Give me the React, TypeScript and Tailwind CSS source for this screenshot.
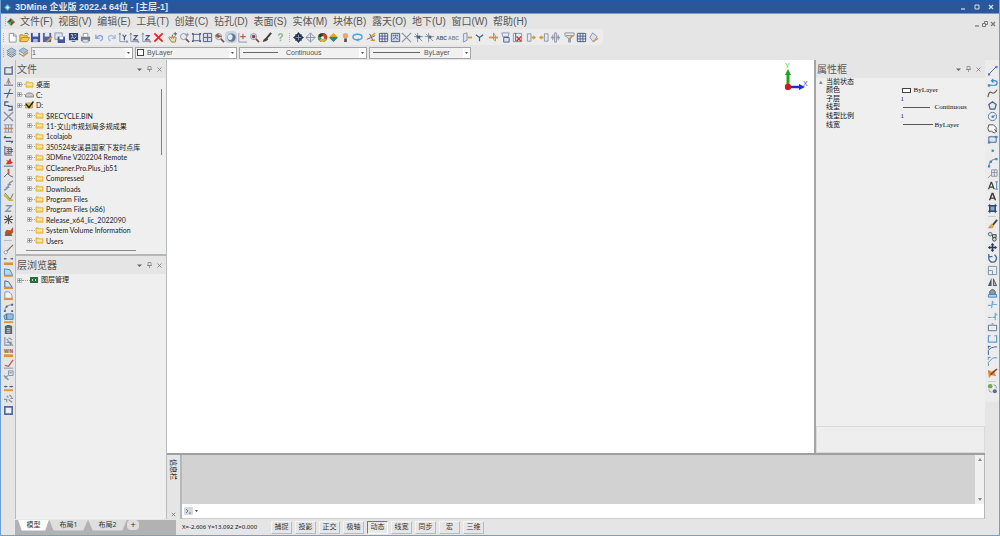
import { ReactNode } from "react";

const N = "#485c84";
const G = "#8792a8";
const O = "#d8963c";
const K = "#3c3c3c";
const B = "#3f86c8";
const R = "#d5352b";

type PathProps = { d: string; c?: string; f?: string; w?: number };

function P({ d, c = N, f = "none", w = 1 }: PathProps) {
  return <path d={d} stroke={c} fill={f} strokeWidth={w} />;
}

function F({ d, c = N }: { d: string; c?: string }) {
  return <path d={d} fill={c} />;
}

function Glyph({ children }: { children: ReactNode }) {
  return (
    <svg viewBox="0 0 12 12" className="size-[11px] shrink-0" aria-hidden="true">
      {children}
    </svg>
  );
}

type Item = [string, ReactNode];

const base = <F c={O} d="M1 9h10v2H1z" />;

const fileTools: Item[] = [
  ["新建", <P c={G} f="#fff" d="M2.5 1.5h5l2.500 2.500v7h-7.500zM7 1.500v3h3" />],
  ["打开", <><P c="#c08a1e" f="#f4c64e" d="M1 10.500V3h3l1 1h4v2M1 10.500l2-4.500h8.500l-2.500 4.500z" /><P c={N} d="M6 2q3-2 4.500 1" /></>],
  ["保存", <><F c="#3c4f9c" d="M1 1h10v10H1z" /><F c="#e4e9f6" d="M3 1h6v4H3z" /><F c="#aab6da" d="M3.500 7.500h5V11h-5z" /></>],
  ["另存", <><F c="#5363a4" d="M1 1h9v10H1z" /><F c="#e4e9f6" d="M3 1h5v4H3z" /><P c={O} w={2} d="M5 11l6-6" /></>],
  ["全部保存", <><P c={G} f="#dfe5f2" d="M1 1h8v7H1z" /><F c="#44579c" d="M4 5h8v7H4z" /><F c="#fff" d="M6 5h4v3H6z" /></>],
];
const printTools: Item[] = [
  ["截图", <><F c="#304071" d="M1 1h10v8H1zM4 10h4v1H4z" /><P c="#d8e4ff" d="M3 3h2v2M7 3h2M3 7l2-1 2 1 2-2" /></>],
  ["打印", <><F c="#747b89" d="M1 5h10v5H1z" /><P c={G} f="#fff" d="M3.500 5V1.500h5V5M3 8.500h6v2.500H3z" /></>],
];
const axis = <P c={G} d="M2 1v9.500h9M1 3l1-2 1 2M9 9l2 1.500L9 12" />;
const editTools: Item[] = [
  ["撤销", <P c="#8ba8e0" w={1.500} d="M2 3v4h4M2.500 6.500Q6 2 9 5q1 3-2 5" />],
  ["重做", <P c="#a9bfe8" w={1.500} d="M10 3v4H6M9.500 6.500Q6 2 3 5q-1 3 2 5" />],
  ["XY视图", <>{axis}<P c={N} w={1.300} d="M5 3l2 2.500L9 3M7 5v4" /></>],
  ["YZ视图", <>{axis}<P c={N} w={1.300} d="M5 4h4L5 8.500h4.500" /></>],
  ["XZ视图", <>{axis}<P c={N} w={1.300} d="M5 4h4L5 8.500h4.500" /></>],
  ["删除", <P c="#e32922" w={2} d="M1.500 1.500l9 9M10.500 1.500l-9 9" />],
];
const lens = <><circle cx="5" cy="5" r="3.300" fill="#e9eef6" stroke={G} /><P c="#7d5148" w={1.800} d="M7.500 7.500L11 11" /></>;
const viewTools: Item[] = [
  ["平移", <><P c="#8c795c" f="#f3dfae" d="M2 6l3 5h4l1-5-2-1-1 2-1-4-1 4-2-2z" /><P c={N} d="M7 2h4M9 0v4" /></>],
  ["动态缩放", <>{lens}<P c={G} d="M9 1v4M7 3h4" /></>],
  ["窗口缩放", <><P c={N} d="M2.500 2.500h7v7h-7z" /><F c={N} d="M1 1h2v2H1zM9 1h2v2H9zM1 9h2v2H1zM9 9h2v2H9z" /></>],
  ["全部显示", <><P c={N} f="#d7deea" d="M1.500 1.500h9v9h-9z" /><P c={N} d="M6 2v8M2 6h8" /><F c="#a85f54" d="M5 5h2v2H5z" /></>],
  ["上一视图", <>{lens}<F c="#9b5e36" d="M1 4l4-3v2l4 2-4 1v1z" /></>],
  ["三维旋转", <><circle cx="6" cy="6" r="4.500" fill="#66768f" /><path d="M2 4q3-3 5 0 1 3-2 5Q1 8 2 4z" fill="#e3ecf5" /></>],
  ["定位", <><P c={G} d="M2 1v10h9" /><P c="#b0654a" w={1.300} d="M6.500 2v6M3.500 5h6" /></>],
  ["查询", <>{lens}<circle cx="5" cy="5" r="2" fill="#9d3857" /></>],
  ["画刷", <><P c={K} w={2} d="M11 1L6 7" /><F c="#4b433e" d="M6 6l2 2q-2 3-6 3 0-3 4-5z" /></>],
];
const helpTools: Item[] = [
  ["帮助", <P c="#8fc091" w={1.700} d="M4 4q0-2 2-2t2 2q0 1-2 2v1.500M6 8.500v1.500" />],
];
const modelTools: Item[] = [
  ["实体显示", <><F c="#2b3550" d="M6 0l2 2.500h1.500V4L12 6l-2.500 2v1.500H8L6 12 4 9.500H2.500V8L0 6l2.500-2V2.500H4z" /><P c="#8797b5" d="M6 3v6M3 6h6" /></>],
  ["线框显示", <><P c={G} f="#e3e8ef" d="M6 1l5 5-5 5-5-5z" /><P c={G} d="M6 1v10M1 6h10" /></>],
  ["色彩", <><circle cx="6" cy="6" r="5" fill="#333" /><path d="M6 6V1a5 5 0 0 1 4.500 7z" fill="#da3a31" /><path d="M6 6l4.500 2A5 5 0 0 1 2 9z" fill="#d9b23a" /><path d="M6 6L2 9a5 5 0 0 1-1-4z" fill="#49a84c" /><circle cx="6" cy="6" r="1.500" fill="#fff" /></>],
  ["着色", <><F c="#d9a52d" d="M6 1l5 5H1z" /><F c="#2f8277" d="M1 6h10l-5 5z" /><P c="#496f8d" d="M2 6h8" /></>],
  ["灯光", <><circle cx="6" cy="4" r="3" fill="#eead51" /><F c="#555" d="M4.500 7h3v4h-3z" /></>],
  ["环绕", <><ellipse cx="6" cy="5.500" rx="5" ry="3" fill="none" stroke="#44a5e3" strokeWidth="1.500" /><P c="#44a5e3" d="M7 7l-2 2 3 1" /></>],
];
const textTool = (c: string) => <text x="6" y="8.500" fontSize="5.500" fontWeight="bold" textAnchor="middle" fill={c} fontFamily="Liberation Sans, sans-serif">ABC</text>;
const snapTools: Item[] = [
  ["捕捉设置", <><P c={N} d="M1 8l9-4M4 2l4 8" /><P c={O} w={1.500} d="M4 6l6-5M5 9h5" /></>],
  ["网格", <P c={N} d="M1.500 1.500h9v9h-9zM4.500 1v10M7.500 1v10M1 4.500h10M1 7.500h10" />],
  ["栅格点", <><P c={N} f="#cbd3e2" d="M1.500 1.500h9v9h-9z" /><P c={N} d="M3 4h2M7 4h2M3 8l3-2 3 2M6 3v2" /></>],
  ["交点", <P c={G} w={1.300} d="M1 1l10 10M11 1L1 11" />],
  ["点", <><P c={G} d="M5 1v10M1 5h10M2 2l8 8" /><F d="M4 4h4v3H4z" /></>],
  ["节点", <><P c={G} d="M5 1v10M1 5h10M2 2l8 8" /><F c="#4c756f" d="M5 4h3v3H5z" /></>],
  ["文字", textTool(N)],
  ["文字隐藏", textTool("#7a8990")],
];
const lineTools: Item[] = [
  ["剖面", <><P c={G} f="#dce4ef" d="M1.500 2l4-1v8l-4 2z" /><P c={O} w={2} d="M6 6h5" /></>],
  ["分支", <P c={N} w={1.300} d="M2 3l4 3v4M6 6l4-3" />],
];
const solidTools: Item[] = [
  ["移动", <><P c={G} f="#dce4ef" d="M6 1l2 3v6l-2-2z" /><P c={O} w={2} d="M1 6h10" /></>],
  ["复制实体", <><P c={G} f="#e5ebf3" d="M2 1h8l-1 4H3z" /><P c={N} f="#dbe2ec" d="M4 6h6v5H4z" /></>],
  ["删除实体", <><P c={G} f="#e5ebf3" d="M1.500 1.500h9v9h-9z" /><P c={R} w={1.600} d="M5 5l5 5M10 5l-5 5" /><P c={N} d="M4 1v9" /></>],
];
const sectionTools: Item[] = [
  ["右移剖面", <><P c={G} f="#e4eaf3" d="M1.500 2h4v8h-4z" /><F c={O} d="M6 5h2V3.500L11 6 8 8.500V7H6z" /></>],
  ["左移剖面", <><P c={G} f="#e4eaf3" d="M7 2h4v8H7z" /><F c={O} d="M6 5H4V3.500L1 6l3 2.500V7h2z" /></>],
  ["双向剖面", <><P c={O} w={1.800} d="M1 6h10" /><P c={G} f="#e4eaf3" d="M5 1h2v10H5zM3 3v6M9 3v6" /></>],
];
const filterTools: Item[] = [
  ["过滤", <><P c={G} f="#e4eaf3" d="M1 1h10v3L7 7v4H5V7L1 4z" /><P c={O} w={1.500} d="M2 4h7L6 7v3" /></>],
  ["表格", <P c={N} d="M1.500 1.500h9v9h-9zM4.500 1v10M7.500 1v10M1 4.500h10M1 7.500h10" />],
  ["翻转", <><P c={G} f="#dce2ed" d="M5 1l5 4-4 6-4-5z" /><P c={O} w={1.500} d="M6 10l5-3" /></>],
];

const leftTop: Item[] = [
  ["闭合", <P c={N} w={1.300} d="M2 3h8v7H2zM10 1v3" />],
  ["打断", <><P c={G} w={1.500} d="M1 9h10M6 1v7" /><P c="#bf704d" d="M4 7l2-4 2 4" /></>],
  ["相交", <P c={N} w={1.200} d="M1 6h10M8 1L4 11" />],
  ["连接", <P c={N} w={1.300} d="M6 2H2v4h4v1h4v4H6" />],
  ["交叉", <P c={G} w={1.500} d="M1 1l10 10M11 1L1 11" />],
  ["等分", <><P c={G} d="M1 2h10M1 10h10M3 2v8M6 2v8M9 2v8" /><P c="#bd845d" w={1.500} d="M1 6h10" /></>],
  ["平行", <P c={N} w={1.200} d="M1 4h8M3 8h8M3 2L1 4M9 10l2-2" />],
  ["编辑节点", <><P c={N} d="M2 1v10h8M2 3h7v6H2M4 5h7M4 7h7" /><P c="#a55f48" d="M6 3v7" /></>],
  ["高程", <><P c={N} d="M1 10h10" /><F c={R} d="M3 8l2-3-2-2 3 1 2-3 1 4 2 1-3 2z" /></>],
  ["抬升", <><P c={N} d="M1 10l4-4 2 2 4 2" /><P c="#b46235" w={2} d="M6 1v6" /></>],
  ["光滑", <P c={G} w={1.500} d="M1 11q4-1 5-5t5-5M3 8h4M5 5h4" />],
  ["抽稀", <><P c="#4b7b55" d="M2 2l6 7 3-6" /><P c="#d0af42" w={1.800} d="M1 4l6 6h4" /></>],
  ["变换", <P c={G} w={1.400} d="M3 3h6L3 9h6" />],
  ["炸开", <P c="#555" w={1.200} d="M6 1v10M1 6h10M2 2l8 8M10 2l-8 8" />],
  ["着色刷", <><F c="#bc4f30" d="M2 7l2-3 4 1 3-4v6l-3 3H3z" /><P c="#3c664b" w={1.500} d="M2 10h8" /></>],
];
const leftBottom: Item[] = [
  ["量测", <><P c="#8c6a63" w={1.300} d="M4 8l7-7" /><circle cx="3" cy="9" r="1.800" fill="#fff" stroke={G} /></>],
  ["距离", <><F c={O} d="M1 7h10v3H1z" /><P c={N} d="M1 3h3M8 3h3M2 2v2M10 2v2" /></>],
  ["面积", <><P c={B} f="#bad8ef" d="M1.500 2l6 1 3 6h-9z" /><F c={O} d="M1 10h10v1H1z" /></>],
  ["坡度", <><P c={N} f="#d9e3ef" d="M2 9V2l4 1 4 6z" />{base}</>],
  ["体积", <><P c={G} f="#f1f3f6" d="M2 9V2h4q4 1 4 7z" />{base}</>],
  ["弧长", <><P c={G} w={1.300} d="M2 10q0-7 8-7" /><F c={N} d="M1 9h2v2H1zM3 4h2v2H3zM9 2h2v2H9zM9 9h2v2H9z" /></>],
  ["方量", <><P c={B} f="#9bbdd8" d="M1 3l3-2h7v6H2z" /><P c={N} d="M4 1v6" />{base}</>],
  ["剪贴板", <><F c="#5b6471" d="M2 2h8v9H2zM4 1h4v2H4z" /><P c="#cbd3db" d="M4 5h4M4 7h4M4 9h4" /></>],
  ["角度", <P c={G} w={1.200} d="M2 1v9h9M4 3l5 7M4 7h5v3M6 2l4 2" />],
  ["宽度标注", <><text x="6" y="6" fontSize="5" fontWeight="bold" textAnchor="middle" fill="#8d4b34" fontFamily="Liberation Sans, sans-serif">WIN</text><F c={O} d="M1 8h10v3H1z" /></>],
  ["清理", <><P c={G} d="M1 10h10" /><P c="#b46052" w={1.500} d="M11 1L6 8l-4-1" /></>],
  ["说明", <><P c={G} f="#d9e0eb" d="M6 1h5v5H6zM7 3h3" /><P c={G} w={1.500} d="M1 6l5 5M2 9l3-3" /></>],
  ["间距", <><F c={O} d="M1 8h10v2H1z" /><P c={N} d="M1 5h4M7 5h4M3 4v2M9 4v2" /></>],
  ["散点", <P c={G} w={1.300} d="M1 7h3v3M4 3l2 2M7 2l3 3M6 7l4 3M8 6h3" />],
  ["图框", <P c="#506b99" f="#eef2f8" w={1.800} d="M2 2h8v8H2z" />],
];
const dot = (x: number, y: number) => <F c={B} d={`M${x - 1} ${y - 1}h2.500v2.500h-2.500z`} />;
const rightTop: Item[] = [
  ["直线", <><P c={N} d="M2 10l8-8" />{dot(2, 10)}{dot(10, 2)}</>],
  ["多段线", <><P c={B} w={1.300} d="M1 9h7q3 0 3-2.500T8 4H5M7 2L5 4l2 2" />{dot(2, 9)}</>],
  ["曲线", <P c="#54565b" w={1.200} d="M1 10q1-7 4-5t6-3" />],
  ["多边形", <P c="#52627a" f="#e3eaf2" w={1.400} d="M6 2l4 3-1.500 5h-5L2 5z" />],
  ["圆", <><circle cx="6" cy="6" r="4.500" fill="#e9eef6" stroke="#65748d" /><P c={B} d="M6 6l3-1" />{dot(6, 6)}</>],
  ["云线", <P c="#4d4d4d" f="#f7f7f7" d="M2 2h5l3 3v4l-2 2-3-2H2L1 6zM8 7l3 3" />],
  ["矩形", <><P c={N} f="#d5e6f4" d="M2 3h8v6H2z" />{dot(2, 9)}{dot(10, 3)}</>],
  ["点", dot(6, 6)],
  ["圆弧", <><P c={G} w={1.200} d="M2 11q0-8 8-9" />{dot(2, 10)}{dot(10, 2)}{dot(4, 5)}</>],
  ["插入块", <P c={G} d="M5 2h6v7H5zM8 2v7M5 5h6M1 11l4-4" />],
  ["单行文字", <><path fillRule="evenodd" fill={K} d="M1 10L4 2h1.500l3 8H7L6.500 8.500H3L2.500 10zM3.500 7H6L4.700 3.700z" /><P c={B} d="M10.500 2v8M9 2h3M9 10h3" /></>],
  ["多行文字", <path fillRule="evenodd" fill={K} d="M2 10L5 2h2l3 8H8.300L7.700 8.500H4.300L3.700 10zM4.800 7h2.400L6 3.700z" />],
  ["图案", <><P c={N} w={1.500} f="#87a7cc" d="M3 3h6v6H3z" /><P c="#23446e" d="M1 3h10M1 9h10M3 1v10M9 1v10" /></>],
];
const rightBottom: Item[] = [
  ["擦除", <><P c="#444" w={2} d="M11 1L6 7" /><F c="#ddac49" d="M5 5l3 3-2 2-3-3z" /><F c="#d78176" d="M3 7l3 3H1z" /></>],
  ["复制", <><circle cx="3.500" cy="3.500" r="2" fill="#cde" stroke="#526d65" /><P c={K} f="#c9d8d5" d="M6 4h4v3H6z" /><circle cx="8" cy="9" r="2" fill="#cdd" stroke={K} /></>],
  ["移动", <><P c="#27375c" w={1.600} d="M6 2v8M2 6h8" /><F c="#27375c" d="M6 1l2 2.500H4zM6 11l2-2.500H4zM1 6l2.500-2v4zM11 6L8.500 4v4z" /></>],
  ["旋转", <P c="#426c94" w={1.500} d="M3 3a4.200 4.200 0 1 0 5-1M2 1v3h4" />],
  ["缩放", <P c="#7290ae" d="M1.500 1.500h9v9h-9zM1.500 6H6v4.500" />],
  ["镜像", <><F c="#505760" d="M5 2v9H1z" /><P c="#505760" f="#a6abb0" d="M7 3v7.500h3.500z" /></>],
  ["偏移", <><P c="#555" f="#8c9cab" d="M3 7V4q3-5 6 0v3z" /><P c={B} f="#b3d1e8" d="M1.500 7h9v3h-9z" /></>],
  ["修剪", <P c="#70afdf" w={1.300} d="M1 7h4l2-4M6 2l-1 8M5 6h6" />],
  ["延伸", <><P c="#70afdf" w={1.300} d="M6 7h2l3-4M9 2v8" /><P c={G} d="M1 7h4" /></>],
  ["拉伸", <P c="#56718d" d="M1.500 3.500h9v6h-9zM5 2h2" />],
  ["断开", <P c="#5e9bcd" w={1.300} d="M4 3H1.500v7h9V3H8" />],
  ["倒角", <P c="#345f90" d="M1.500 11V6q2-4 9.500-4M1.500 1v3M1 1.500h3" />],
  ["圆角", <P c="#5b8dbb" d="M1.500 11V7l5-5H11M1.500 1v3M1 1.500h3" />],
  ["分解", <><F c="#dc863d" d="M1 2l4 2 5-3-2 4 2 4-5-1-3 3z" /><P c="#7d392b" w={1.500} d="M4 7l7-6" /></>],
];
const rightLast: Item[] = [
  ["切换视图", <><circle cx="3.500" cy="3.500" r="2.500" fill="#73a951" /><circle cx="8.500" cy="9" r="2.300" fill="#6464aa" /><P c={G} d="M7 2q4 0 3 4M2 7q0 3 3 3" /></>],
];

function ToolButton({ item }: { item: Item }) {
  return (
    <button type="button" aria-label={item[0]} className={`flex min-h-0 min-w-0 items-center justify-center overflow-hidden ${item[0] === "三维旋转" ? "rounded-sm bg-[#c9d3df]" : ""}`}>
      <Glyph>{item[1]}</Glyph>
    </button>
  );
}

function HGroup({ items, width }: { items: Item[]; width: string }) {
  return (
    <div role="group" className={`grid h-3 shrink-0 auto-cols-fr grid-flow-col ${width}`}>
      {items.map((i) => <ToolButton key={i[0]} item={i} />)}
    </div>
  );
}

function VGroup({ items, height }: { items: Item[]; height: string }) {
  return (
    <div role="group" className={`grid w-full shrink-0 auto-rows-fr ${height}`}>
      {items.map((i) => <ToolButton key={i[0]} item={i} />)}
    </div>
  );
}

function Combo({ label, value, width, lead }: { label: string; value: string; width: string; lead?: ReactNode }) {
  return (
    <label className={`flex h-3 shrink-0 items-center border border-[#a5a5a5] bg-[#f1f1f1] ${width}`}>
      {lead}
      <select aria-label={label} className="h-full min-w-0 flex-1 appearance-none bg-transparent text-[7px] leading-[10px] text-[#555] outline-none">
        <option>{value}</option>
      </select>
      <span className="flex h-full w-[7px] items-center justify-center bg-white">
        <svg viewBox="0 0 6 4" className="w-[3px]"><path d="M0 0h6L3 4z" fill="#555" /></svg>
      </span>
    </label>
  );
}

function PanelHeader({ title }: { title: string }) {
  return (
    <div className="flex h-[18px] shrink-0 items-center bg-[#e5e5e5] pr-[3px] pl-px text-[#555]">
      <h2 className="flex-1 text-[10px] leading-3">{title}</h2>
      <div className="flex items-center gap-[3px]">
        <button type="button" aria-label="菜单"><svg viewBox="0 0 7 7" className="size-[7px]"><path d="M1 2.500h5L3.500 5z" fill="#666" /></svg></button>
        <button type="button" aria-label="固定"><svg viewBox="0 0 7 7" className="size-[7px]"><path d="M2 .500h3v3H2zM1 3.500h5M3.500 3.500V6" fill="none" stroke="#888" strokeWidth=".8" /></svg></button>
        <button type="button" aria-label="关闭"><svg viewBox="0 0 7 7" className="size-[7px]"><path d="M1.500 1.500l4 4M5.500 1.500l-4 4" stroke="#777" strokeWidth=".8" /></svg></button>
      </div>
    </div>
  );
}

function Expander() {
  return (
    <svg viewBox="0 0 5 5" className="size-[5px] shrink-0"><path d="M.500.500h4v4h-4z" fill="#eee" stroke="#aaa" strokeWidth=".8" /><path d="M1 2.500h3M2.500 1v3" stroke="#777" strokeWidth=".8" /></svg>
  );
}

function Folder() {
  return (
    <svg viewBox="0 0 9 8" className="h-[7px] w-[9px] shrink-0"><path d="M.500 7V1h3l1 1h4v5z" fill="#f7cf58" stroke="#d3a02f" strokeWidth=".7" /><path d="M1.500 3h6v2h-6z" fill="#fdebab" /></svg>
  );
}

const drives: [string, ReactNode][] = [
  ["桌面", <Folder />],
  ["C:", <svg viewBox="0 0 9 6" className="h-[6px] w-[9px] shrink-0"><path d="M.500 3l2-2h4l2 2v2h-8z" fill="#c9c9c9" stroke="#777" strokeWidth=".8" /></svg>],
  ["D:", <svg viewBox="0 0 9 8" className="h-2 w-[9px] shrink-0"><path d="M.500 7V2h7v5z" fill="#f3c64c" stroke="#b38a30" strokeWidth=".7" /><path d="M1 3l3 3.500L8.500.500" fill="none" stroke="#222" strokeWidth="1.500" /></svg>],
];
const folders = ["$RECYCLE.BIN", "11-文山市规划局多规成果", "1colajob", "350524安溪县国家下发时点库", "3DMine V202204 Remote", "CCleaner.Pro.Plus_jb51", "Compressed", "Downloads", "Program Files", "Program Files (x86)", "Release_x64_lic_2022090", "System Volume Information", "Users"];

function FileTree() {
  return (
    <div className="flex min-h-0 flex-1 flex-col pt-px">
      <div className="flex pr-1">
        <ul className="grid h-[167px] min-w-0 flex-1 auto-rows-fr pl-px font-['Lato','Noto_Sans_CJK_SC',sans-serif] text-[7px] text-[#1a1a1a]">
          {drives.map(([name, icon]) => (
            <li key={name} className="flex min-h-0 items-center whitespace-nowrap leading-[10px]">
              <Expander />
              <span className="w-[3px] border-t border-dotted border-[#aaa]" />
              {icon}
              <span className="pl-[2px]">{name}</span>
            </li>
          ))}
          {folders.map((name) => (
            <li key={name} className="flex min-h-0 items-center whitespace-nowrap pl-[10px] leading-[10px]">
              {name.startsWith("System") ? <span className="w-[5px] border-t border-dotted border-[#aaa]" /> : <Expander />}
              <span className="w-[3px] border-t border-dotted border-[#aaa]" />
              <Folder />
              <span className="pl-[2px]">{name}</span>
            </li>
          ))}
        </ul>
        <div className="mt-2.5 h-[66px] w-px bg-[#808080]" />
      </div>
      <div className="mt-1 ml-2.5 h-px w-[110px] bg-[#8a8a8a]" />
    </div>
  );
}

const properties: [string, string, ReactNode][] = [
  ["颜色", "ByLayer", <span className="mr-[3px] ml-px h-[5px] w-[9px] border border-[#444] bg-white" />],
  ["子层", "1", null],
  ["线型", "Continuous", <span className="mr-[5px] ml-0.5 w-[27px] border-t border-[#555]" />],
  ["线型比例", "1", null],
  ["线宽", "ByLayer", <span className="mr-0.5 ml-0.5 w-[30px] border-t border-[#555]" />],
];

function PropertyPanel() {
  return (
    <aside className="flex w-[171px] shrink-0 flex-col border-l-2 border-[#a3a6a8] bg-[#efefef]">
      <PanelHeader title="属性框" />
      <table className="h-[51px] w-full table-fixed font-['Liberation_Serif','Noto_Sans_CJK_SC',serif] text-[7px] leading-2 text-[#111]">
        <thead>
          <tr><th colSpan={2} className="p-0 text-left font-normal"><span className="inline-block w-[10px] pl-[3px] text-[#888]">▴</span>当前状态</th></tr>
        </thead>
        <tbody>
          {properties.map(([name, value, mark]) => (
            <tr key={name}>
              <th scope="row" className="w-[85px] p-0 pl-2.5 text-left font-normal">{name}</th>
              <td className="p-0"><span className="flex items-center">{mark}{value}</span></td>
            </tr>
          ))}
        </tbody>
      </table>
      <div className="mt-auto h-[27px] border border-[#dadada] bg-[#eeeeee]" />
    </aside>
  );
}

function AxisGizmo() {
  return (
    <svg viewBox="0 0 28 30" className="h-[30px] w-7" role="img" aria-label="坐标轴">
      <text x="4" y="6" fontSize="7" fill="#35d435" fontFamily="Liberation Sans, sans-serif">Y</text>
      <path d="M7 25V12" stroke="#17a717" strokeWidth="3" />
      <path d="M4 13l3-6 3 6z" fill="#17a717" />
      <path d="M7 25h13" stroke="#1832c8" strokeWidth="2.500" />
      <path d="M18 22l6 3-6 3z" fill="#1832c8" />
      <rect x="4" y="22" width="6" height="6" rx="2" fill="#c61e1e" />
      <text x="22" y="24" fontSize="7" fill="#3a46e8" fontFamily="Liberation Sans, sans-serif">X</text>
    </svg>
  );
}

const menus = ["文件(F)", "视图(V)", "编辑(E)", "工具(T)", "创建(C)", "钻孔(D)", "表面(S)", "实体(M)", "块体(B)", "露天(O)", "地下(U)", "窗口(W)", "帮助(H)"];
const modes = ["捕捉", "投影", "正交", "极轴", "动态", "线宽", "同步", "宏", "三维"];
const layouts = ["模型", "布局1", "布局2"];

function WindowButtons({ className, restore = false }: { className: string; restore?: boolean }) {
  return (
    <div className={`ml-auto flex ${className}`}>
      <button type="button" aria-label="最小化"><svg viewBox="0 0 6 6" className="size-1.5"><path d="M1 5h4" stroke="currentColor" strokeWidth="1.200" /></svg></button>
      <button type="button" aria-label="还原">
        <svg viewBox="0 0 6 6" className="size-1.5">
          <path d={restore ? "M.500 2.500h3v3h-3zM2.500 2V.500h3v3H4" : "M1 1h4v4H1z"} fill="none" stroke="currentColor" />
        </svg>
      </button>
      <button type="button" aria-label="关闭窗口"><svg viewBox="0 0 6 6" className="size-1.5"><path d="M1 1l4 4M5 1L1 5" stroke="currentColor" strokeWidth="1.200" /></svg></button>
    </div>
  );
}

function Grip() {
  return <span className="h-[9px] w-px shrink-0 border-l border-dotted border-[#aaa]" />;
}

export default function App() {
  return (
    <div className="flex h-screen flex-col border-x border-b border-[#6f9fd4] bg-[#e5e5e5] font-['Noto_Sans','Noto_Sans_CJK_SC',sans-serif] text-[#333]">
      <header className="flex h-[14px] shrink-0 items-center border-t border-b border-t-[#1b5cb0] border-b-[#7e9ac2] bg-[#2b579a] pr-[5px] pl-[3px]">
        <svg viewBox="0 0 8 8" className="mr-1 size-[7px]"><path d="M4 0l4 4-4 4-4-4z" fill="#54abc3" /><path d="M4 2l2 2-2 2-2-2z" fill="#d8f2f2" /></svg>
        <h1 className="font-['Liberation_Sans','Noto_Sans_CJK_SC',sans-serif] text-[9px] leading-3 font-bold whitespace-nowrap text-[#dfe6f1]">3DMine 企业版 2022.4 64位 - [主层-1]</h1>
        <WindowButtons className="gap-2 text-[#d6e0ee]" />
      </header>

      <nav className="flex h-[15px] shrink-0 items-center pr-[3px] pl-1">
        <Grip />
        <svg viewBox="0 0 8 8" className="mx-px mr-[5px] size-2"><path d="M4 0l4 4H4z" fill="#3f9b45" /><path d="M4 0v4H0z" fill="#5f4a3b" /><path d="M0 4h4v4z" fill="#4aa951" /><path d="M4 4h4L4 8z" fill="#a23d33" /></svg>
        <div className="flex w-[507px] justify-between font-['Liberation_Sans','Noto_Sans_CJK_SC',sans-serif] text-[10px] leading-3 text-[#555]">
          {menus.map((m) => <button type="button" key={m} className="whitespace-nowrap">{m}</button>)}
        </div>
        <WindowButtons restore className="gap-[2px] self-end pb-0.5 text-[#777]" />
      </nav>

      <div className="flex h-4 shrink-0 items-center">
        <div className="flex items-center gap-[3px] rounded-r bg-[#ececec] py-0.5 pr-1 pl-[2px]">
          <Grip />
          <HGroup items={fileTools} width="w-[58px]" />
          <HGroup items={printTools} width="w-[23px]" />
          <HGroup items={editTools} width="w-[70px]" />
          <HGroup items={viewTools} width="w-[105px]" />
          <HGroup items={helpTools} width="w-[11px]" />
          <Grip />
          <HGroup items={modelTools} width="w-[70px]" />
          <HGroup items={snapTools} width="w-[93px]" />
          <HGroup items={lineTools} width="w-[23px]" />
          <HGroup items={solidTools} width="w-[35px]" />
          <HGroup items={sectionTools} width="w-[35px]" />
          <HGroup items={filterTools} width="w-[35px]" />
        </div>
      </div>

      <div className="flex h-[15px] shrink-0 items-center gap-[2px] pl-[2px] font-['Liberation_Sans',sans-serif]">
        <Grip />
        <HGroup width="w-[23px]" items={[
          ["图层", <><P c="#7894ad" f="#a7c3d9" d="M1 4l5-3 5 3-5 3z" /><P c="#58758f" d="M1 6l5 3 5-3M1 8l5 3 5-3" /></>],
          ["图层编辑", <><P c="#7894ad" f="#a7c3d9" d="M1 4l5-3 5 3-5 3z" /><P c="#58758f" d="M1 7l5 3" /><P c={O} w={2} d="M5 10l6-4" /></>],
        ]} />
        <Combo label="当前图层" value="1" width="w-[102px]" />
        <Combo label="颜色" value="ByLayer" width="w-[102px]" lead={<span className="mr-[3px] ml-px size-[7px] border border-[#444] bg-white" />} />
        <Combo label="线型" value="Continuous" width="w-[128px]" lead={<span className="mr-2 ml-[3px] w-[35px] border-t border-[#666]" />} />
        <Combo label="线宽" value="ByLayer" width="w-[102px]" lead={<span className="mr-1 ml-[3px] w-[47px] border-t border-[#666]" />} />
      </div>

      <div className="flex min-h-0 flex-1">
        <aside className="flex w-[14px] shrink-0 flex-col items-center pt-[5px]">
          <VGroup items={leftTop} height="h-[172px]" />
          <span className="my-[3px] w-2 border-t border-[#bbb]" />
          <VGroup items={leftBottom} height="h-[172px]" />
        </aside>

        <div className="flex min-w-0 flex-1 flex-col">
          <div className="flex min-h-0 flex-1">
            <div className="flex w-[152px] shrink-0 flex-col border-r border-l border-[#b9bcbe] bg-[#efefef]">
              <section className="flex h-[196px] shrink-0 flex-col border-b-2 border-[#b4b6b8]">
                <PanelHeader title="文件" />
                <FileTree />
              </section>
              <section>
                <PanelHeader title="层浏览器" />
                <div className="flex h-3 items-center pl-px text-[7px] text-[#222]">
                  <Expander />
                  <span className="w-2 border-t border-dotted border-[#999]" />
                  <svg viewBox="0 0 8 6" className="h-1.5 w-2"><path d="M0 0h8v6H0z" fill="#2e6b43" /><path d="M2 2h1v2H2zM5 2h1v2H5z" fill="#bde0bd" /></svg>
                  <span className="pl-[3px]">图层管理</span>
                </div>
              </section>
            </div>

            <div className="flex min-w-0 flex-1 flex-col">
              <div className="flex min-h-0 flex-1">
                <main className="flex min-w-0 flex-1 items-start justify-end bg-white pt-0.5 pr-[5px]">
                  <AxisGizmo />
                </main>
                <PropertyPanel />
              </div>
              <section className="flex h-[66px] shrink-0 border-t-2 border-[#9ba0a4]">
                <div className="flex w-[13px] shrink-0 flex-col items-center justify-between pt-1 pb-0.5 text-[7px] leading-[9px] text-[#111]">
                  <span className="[text-orientation:sideways] [writing-mode:vertical-rl]">信息栏</span>
                  <button type="button" aria-label="关闭信息栏"><svg viewBox="0 0 6 6" className="size-[5px]"><path d="M1 1l4 4M5 1L1 5" stroke="#777" /></svg></button>
                </div>
                <div className="flex min-w-0 flex-1 flex-col border-r border-l-2 border-[#b5b8bb]">
                  <div role="log" className="flex flex-1 justify-end bg-[#d2d2d2]">
                    <div className="flex w-[9px] flex-col items-center justify-between bg-[#f0f0f0] py-[3px]">
                      <svg viewBox="0 0 4 3" className="w-1"><path d="M0 3h4L2 0z" fill="#888" /></svg>
                      <svg viewBox="0 0 4 3" className="w-1"><path d="M0 0h4L2 3z" fill="#888" /></svg>
                    </div>
                  </div>
                  <label className="flex h-[15px] items-center border-b border-[#ccc] bg-white pl-0.5 text-[7px] text-[#555]">
                    <span className="flex h-2 w-[9px] items-center justify-center rounded-[1px] bg-[#d3d9df]"><svg viewBox="0 0 7 6" className="w-[7px]"><path d="M1 1l2 2-2 2M4 5h2" fill="none" stroke="#666" strokeWidth=".8" /></svg></span>
                    <svg viewBox="0 0 4 3" className="ml-0.5 w-[3px]"><path d="M0 0h4L2 3z" fill="#555" /></svg>
                    <input aria-label="命令" className="min-w-0 flex-1 bg-transparent px-1 outline-none" />
                  </label>
                </div>
              </section>
            </div>
          </div>

          <footer className="flex h-4 shrink-0 items-center text-[7px]">
            <div className="flex h-[15px] w-[161px] shrink-0 items-start bg-[#b2b2b2] pl-[3px]">
              {layouts.map((l, i) => (
                <button type="button" key={l} className={`flex h-[11px] items-center justify-center whitespace-nowrap [clip-path:polygon(0_0,100%_0,88%_100%,12%_100%)] ${i === 0 ? "w-[31px] bg-white" : "w-[39px] bg-[#dedede]"}`}>{l}</button>
              ))}
              <button type="button" aria-label="新建布局" className="flex h-[10px] w-3 items-center justify-center rounded bg-[#dedede] text-[9px]">+</button>
            </div>
            <output className="ml-1.5 w-[89px] text-[6px] whitespace-nowrap text-[#111]">X=-2.606 Y=13.092 Z=0.000</output>
            <div className="flex gap-[3px]">
              {modes.map((m) => (
                <button type="button" key={m} className={`flex h-[13px] w-[21px] items-center justify-center whitespace-nowrap border ${m === "动态" ? "border-t-[#777] border-r-white border-b-white border-l-[#777] bg-[#e9e9e9]" : "border-t-[#f5f5f5] border-r-[#bbb] border-b-[#bbb] border-l-[#f5f5f5] bg-[#e6e6e6]"}`}>{m}</button>
              ))}
            </div>
          </footer>
        </div>

        <aside className="flex w-[14px] shrink-0 flex-col items-center bg-[#ececec] pt-[5px]">
          <VGroup items={rightTop} height="h-[149px]" />
          <span className="my-[2px] w-2 border-t border-[#ccc]" />
          <VGroup items={rightBottom} height="h-[160px]" />
          <span className="mt-[2px] mb-px w-2 border-t border-[#ccc]" />
          <VGroup items={rightLast} height="h-[11px]" />
          <div className="mt-2 w-full flex-1 bg-[#e5e5e5]" />
        </aside>
      </div>
    </div>
  );
}
